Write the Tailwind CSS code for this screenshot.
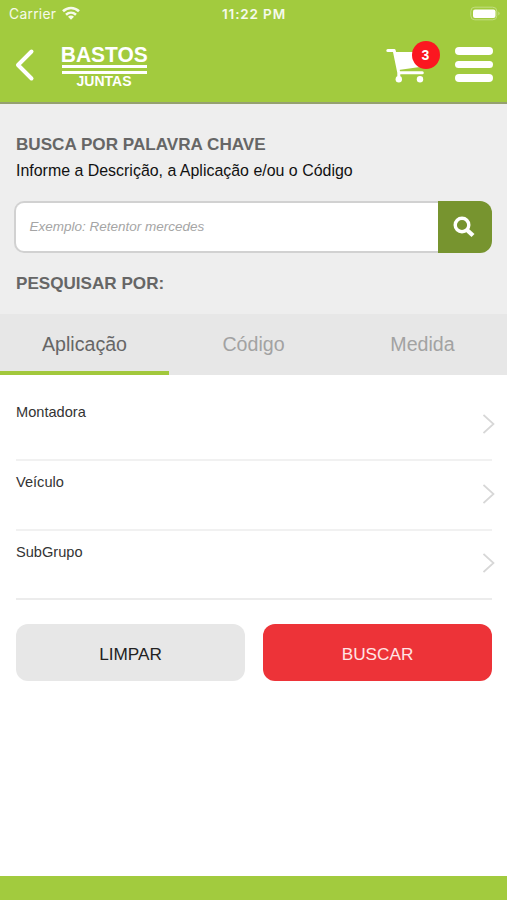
<!DOCTYPE html>
<html lang="pt-BR">
<head>
<meta charset="utf-8">
<title>Bastos Juntas</title>
<script src="https://cdn.jsdelivr.net/npm/@tailwindcss/browser@4"></script>
</head>
<body class="flex h-[900px] w-[507px] flex-col overflow-hidden bg-white font-['Liberation_Sans',Arial,sans-serif]">
<header class="h-[104px] shrink-0 border-b-2 border-[#95a070] bg-[#a2cb3e] text-white">
  <div class="grid h-7 grid-cols-3 items-center pr-[6px] pl-[9px] font-['Inter',sans-serif] text-white/90">
    <div class="flex items-center gap-[6px] text-[13.8px]"><span class="tracking-[0.3px]">Carrier</span>
      <svg class="h-[14px] w-[18px] -translate-y-px" viewBox="0 0 18 14" fill="none" stroke="currentColor" stroke-width="2.6"><path d="M1 5.3C5.700.8 12.300.8 17 5.300M4 8.700c3-2.700 7-2.700 10 0"/><path d="M9 13.700 6 10.800c1.800-1.600 4.200-1.600 6 0z" fill="currentColor" stroke="none"/></svg>
    </div>
    <div class="-translate-x-px text-center text-[13.500px] font-semibold tracking-[0.85px] whitespace-nowrap">11:22 PM</div>
    <svg class="h-[15px] w-[31px] justify-self-end -translate-y-px" viewBox="0 0 31 15"><rect x=".8" y="1.2" width="26" height="12.6" rx="4" fill="none" stroke="#c3de82"/><rect x="3" y="3.400" width="22.500" height="8.500" rx="2" fill="#fff"/><path d="M28.500 5.500q2 2 0 4z" fill="#d0e59e"/></svg>
  </div>
  <div class="flex h-[74px] items-center pr-[14px] pl-[15px]">
    <svg class="h-[34px] w-5" viewBox="0 0 20 34" fill="none" stroke="currentColor" stroke-width="4" stroke-linecap="round" stroke-linejoin="round"><path d="M16.500 3.500 3 17l13.500 13.500"/></svg>
    <div class="ml-[26px] flex w-[86px] flex-col items-center pt-[2px] font-bold">
      <span class="scale-x-[0.92] text-[22.800px] leading-[19px]">BASTOS</span>
      <span class="mt-[1px] h-[9px] w-[85px] border-y-3 border-white"></span>
      <span class="mt-[1px] text-[14px] leading-[13px]">JUNTAS</span>
    </div>
    <div class="relative ml-auto h-[44px] w-[54px]">
      <svg class="h-[44px] w-[44px]" viewBox="0 0 44 44" fill="none" stroke="#fff" stroke-linecap="round"><path d="M1.800 7.500h6.400l4.600 22.300h23.500M12.800 29.800v5" stroke-width="3" stroke-linejoin="round"/><path d="M9.500 9H37L34 24l-21.500 3z" fill="#fff" stroke="none"/><circle cx="12.800" cy="36.200" r="3.200" fill="#fff" stroke="none"/><circle cx="34" cy="36.200" r="3.200" fill="#fff" stroke="none"/></svg>
      <span class="absolute top-[-2px] left-[25.500px] flex h-7 w-7 items-center justify-center rounded-full bg-[#fb1720] text-[14px] font-bold">3</span>
    </div>
    <div class="-mt-px ml-[15px] flex flex-col gap-[6px]"><i class="h-[7.500px] w-[38px] rounded-full bg-white"></i><i class="h-[7.500px] w-[38px] rounded-full bg-white"></i><i class="h-[7.500px] w-[38px] rounded-full bg-white"></i></div>
  </div>
</header>
<section class="h-[210px] shrink-0 bg-[#eeeeee] px-4 pt-[31px]">
  <h1 class="text-[17.130px] leading-[20px] font-bold whitespace-nowrap text-[#666]">BUSCA POR PALAVRA CHAVE</h1>
  <p class="mt-[6px] text-[15.940px] leading-[20px] text-[#111]">Informe a Descrição, a Aplicação e/ou o Código</p>
  <div class="-ml-[2px] mt-[20px] flex h-[52px] w-[478px]">
    <div class="flex flex-1 items-center rounded-l-[10px] border-2 border-r-0 border-[#d1d1d1] bg-white pl-[13.500px] text-[13.500px] text-[#a5a5a5] italic">Exemplo: Retentor mercedes</div>
    <button class="flex w-[54px] items-center justify-center rounded-r-[12px] bg-[#77942f] pr-[2px]"><svg class="h-[22px] w-[22px]" viewBox="0 0 22 22" fill="none" stroke="#fff"><circle cx="9" cy="9" r="6.800" stroke-width="3.400"/><path d="m14 14 6 5.500" stroke-width="4.400"/></svg></button>
  </div>
  <h2 class="mt-[21px] text-[17.100px] leading-[20px] font-bold text-[#666]">PESQUISAR POR:</h2>
</section>
<nav class="grid h-[61px] shrink-0 grid-cols-3 bg-[#e7e7e7] text-center text-[19.600px] leading-[60px] text-[#a2a2a2]">
  <span class="h-[61px] border-b-4 border-[#a2c83c] text-[#666]">Aplicação</span><span>Código</span><span>Medida</span>
</nav>
<main class="flex-1 pr-[15px] pl-4 pt-[16px] text-[14.600px] text-[#333]">
  <div class="flex h-[70px] justify-between border-b-2 border-[#f1f1f1] pt-[12px] leading-[18px]"><span>Montadora</span><svg class="-mr-[3px] mt-[11px] h-[20px] w-[12px]" viewBox="0 0 12 20" fill="none" stroke="#d7d7d7" stroke-width="1.700"><path d="m.5 1 10 9-10 9"/></svg></div>
  <div class="flex h-[70px] justify-between border-b-2 border-[#f1f1f1] pt-[12px] leading-[18px]"><span>Veículo</span><svg class="-mr-[3px] mt-[11px] h-[20px] w-[12px]" viewBox="0 0 12 20" fill="none" stroke="#d7d7d7" stroke-width="1.700"><path d="m.5 1 10 9-10 9"/></svg></div>
  <div class="flex h-[69px] justify-between border-b-2 border-[#ececec] pt-[12px] leading-[18px]"><span>SubGrupo</span><svg class="-mr-[3px] mt-[10px] h-[20px] w-[12px]" viewBox="0 0 12 20" fill="none" stroke="#d7d7d7" stroke-width="1.700"><path d="m.5 1 10 9-10 9"/></svg></div>
  <div class="mt-6 grid grid-cols-2 gap-[18px] text-[17.200px]">
    <button class="h-[57px] rounded-[12px] bg-[#e7e7e7] pt-[4px] text-[#222]">LIMPAR</button>
    <button class="h-[57px] rounded-[12px] bg-[#ed3338] pt-[4px] text-[#ffe5e5]">BUSCAR</button>
  </div>
</main>
<footer class="h-6 shrink-0 bg-[#a2cb3e]"></footer>
</body>
</html>
